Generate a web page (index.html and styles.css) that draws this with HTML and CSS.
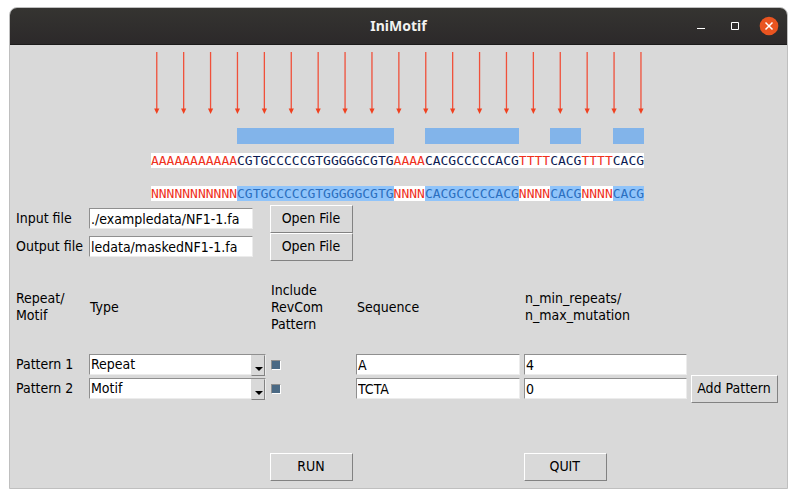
FILE: index.html
```html
<!DOCTYPE html>
<html lang="en">
<head>
<meta charset="utf-8">
<title>IniMotif</title>
<link rel="stylesheet" href="styles.css">
</head>
<body>
<div class="window">
  <header class="titlebar">
    <h1 class="title">IniMotif</h1>
    <div class="controls">
      <button class="control" type="button" aria-label="Minimize"><svg width="20" height="20" viewBox="0 0 20 20"><path d="M6 12.500h8" stroke="#fff"/></svg></button>
      <button class="control" type="button" aria-label="Maximize"><svg width="20" height="20" viewBox="0 0 20 20"><path d="M6.500 6.500h7v7h-7z" fill="none" stroke="#fff"/></svg></button>
      <button class="control" type="button" aria-label="Close"><svg width="20" height="20" viewBox="0 0 20 20"><circle cx="10" cy="10" r="9.300" fill="#e95420"/><path d="M6.500 6.500l7 7M13.500 6.500l-7 7" stroke="#fff" stroke-width="1.500"/></svg></button>
    </div>
  </header>
  <main class="content">
    <div class="figure">
      <svg class="arrows" viewBox="0 0 493 62" aria-hidden="true">
        <defs><g id="arrow"><path d="M0 0V57" stroke="#f0503a" stroke-width="1.300"/><path d="M-2.600 56.500h5.200L0 62z" fill="#f0401f"/></g></defs>
        <use href="#arrow" x="5.700"/><use href="#arrow" x="32.600"/><use href="#arrow" x="59.500"/><use href="#arrow" x="86.400"/><use href="#arrow" x="113.300"/><use href="#arrow" x="140.200"/><use href="#arrow" x="167.100"/><use href="#arrow" x="194"/><use href="#arrow" x="220.900"/><use href="#arrow" x="247.800"/><use href="#arrow" x="274.700"/><use href="#arrow" x="301.600"/><use href="#arrow" x="328.500"/><use href="#arrow" x="355.400"/><use href="#arrow" x="382.300"/><use href="#arrow" x="409.200"/><use href="#arrow" x="436.100"/><use href="#arrow" x="463"/><use href="#arrow" x="489.900"/>
      </svg>
      <div class="bars"><i class="gap-11"></i><i class="bar bar-20"></i><i class="gap-4"></i><i class="bar bar-12"></i><i class="gap-4"></i><i class="bar bar-4"></i><i class="gap-4"></i><i class="bar bar-4"></i></div>
      <div class="sequence"><span class="repeat">AAAAAAAAAAA</span><span>CGTGCCCCCGTGGGGGCGTG</span><span class="repeat">AAAA</span><span>CACGCCCCCACG</span><span class="repeat">TTTT</span><span>CACG</span><span class="repeat">TTTT</span><span>CACG</span></div>
      <div class="sequence masked"><span class="repeat">NNNNNNNNNNN</span><span class="kept">CGTGCCCCCGTGGGGGCGTG</span><span class="repeat">NNNN</span><span class="kept">CACGCCCCCACG</span><span class="repeat">NNNN</span><span class="kept">CACG</span><span class="repeat">NNNN</span><span class="kept">CACG</span></div>
    </div>
    <form class="form">
      <div class="row tall">
        <label class="label" for="input-file">Input file</label>
        <input class="entry path" id="input-file" type="text" value="./exampledata/NF1-1.fa">
        <button class="button" type="button">Open File</button>
      </div>
      <div class="row tall">
        <label class="label" for="output-file">Output file</label>
        <input class="entry path" id="output-file" type="text" value="ledata/maskedNF1-1.fa">
        <button class="button" type="button">Open File</button>
      </div>
      <div class="row headings">
        <span class="label">Repeat/<br>Motif</span>
        <span class="heading" id="type">Type</span>
        <span class="heading" id="revcom">Include<br>RevCom<br>Pattern</span>
        <span class="heading" id="seq">Sequence</span>
        <span class="heading" id="limit">n_min_repeats/<br>n_max_mutation</span>
      </div>
      <div class="row">
        <span class="label" id="p1">Pattern 1</span>
        <span class="combo"><select class="select" aria-labelledby="p1 type"><option>Repeat</option><option>Motif</option></select></span>
        <input class="check" type="checkbox" checked aria-labelledby="p1 revcom">
        <input class="entry" type="text" value="A" aria-labelledby="p1 seq">
        <input class="entry" type="text" value="4" aria-labelledby="p1 limit">
      </div>
      <div class="row tall">
        <span class="label" id="p2">Pattern 2</span>
        <span class="combo"><select class="select" aria-labelledby="p2 type"><option>Motif</option><option>Repeat</option></select></span>
        <input class="check" type="checkbox" checked aria-labelledby="p2 revcom">
        <input class="entry" type="text" value="TCTA" aria-labelledby="p2 seq">
        <input class="entry" type="text" value="0" aria-labelledby="p2 limit">
        <button class="button add" type="button">Add Pattern</button>
      </div>
      <div class="row actions">
        <button class="button run" type="button">RUN</button>
        <button class="button quit" type="button">QUIT</button>
      </div>
    </form>
  </main>
</div>
</body>
</html>
```
FILE: styles.css
```css
* { box-sizing: border-box; }

body {
  margin: 0;
  padding: 7px 9px 8px;
  background: #fff;
  color: #000;
  font: 14px/17px "DejaVu Sans Condensed", "DejaVu Sans", sans-serif;
}

button, input, select { font: inherit; color: inherit; margin: 0; border-radius: 0; }

.window {
  border: 1px solid #bfbfbf;
  border-radius: 8px 8px 0 0;
  background: #d9d9d9;
  overflow: hidden;
}

.titlebar {
  display: grid;
  grid-template-columns: 1fr auto 1fr;
  align-items: center;
  height: 37px;
  padding: 0 8px;
  border-bottom: 1px solid #1c1b1b;
  background: linear-gradient(#353431, #2c292a);
}

.title {
  grid-column: 2;
  margin: 0;
  color: #f2f2f0;
  font: bold 14px/18px "Noto Sans", sans-serif;
}

.controls { display: flex; justify-content: flex-end; gap: 14px; }
.control { width: 20px; height: 20px; padding: 0; border: 0; background: none; }
.control svg { display: block; }

.content { padding: 7px 9px 7px 4px; }

.figure {
  width: max-content;
  margin: 0 auto;
  padding-left: 3px;
  font: 13px/15px "DejaVu Sans Mono", monospace;
}

.arrows { display: block; width: 100%; height: 62px; }

.bars { display: flex; height: 16px; margin: 14px 0 9px; }
.bar { background: #82b4ea; }
.gap-4, .bar-4 { width: 4ch; }
.gap-11 { width: 11ch; }
.bar-12 { width: 12ch; }
.bar-20 { width: 20ch; }

.sequence { display: flex; height: 15px; background: #fff; color: #0c1a52; }
.repeat { color: #f0301c; }
.masked { margin: 18px 0 4px; }
.kept { background: #90c4fa; color: #2b6fc0; }

.row {
  display: grid;
  grid-template-columns: 75fr 181fr 86fr 168fr 167fr 87fr;
  align-items: center;
}

.label { padding-left: 2px; white-space: nowrap; }
.heading { padding-left: 1px; }
.headings { height: 93px; padding-bottom: 1px; }

.entry {
  width: calc(100% - 4px);
  height: 21px;
  padding: 0 1px;
  border: 1px solid;
  border-color: #8f8f8f #ececec #ececec #8f8f8f;
  background: #fff;
}

.path { width: calc(100% - 17px); }

.combo {
  display: block;
  position: relative;
  margin-right: 4px;
}

.select {
  appearance: none;
  display: block;
  width: 100%;
  height: 21px;
  padding: 0 14px 0 1px;
  border: 1px solid;
  border-color: #8f8f8f #ececec #ececec #8f8f8f;
  background: #fff;
}

.combo::before {
  content: "";
  position: absolute;
  top: 1px;
  right: 1px;
  width: 12px;
  height: 19px;
  border: 1px solid;
  border-color: #d9d9d9 #828282 #828282 #d9d9d9;
  background: #d9d9d9;
  pointer-events: none;
}

.combo::after {
  content: "";
  position: absolute;
  top: 13px;
  right: 3px;
  width: 8px;
  height: 4px;
  background: #000;
  clip-path: polygon(0 0, 100% 0, 50% 100%);
  pointer-events: none;
}

.check {
  appearance: none;
  width: 10px;
  height: 10px;
  margin-left: 1px;
  border: 1px solid;
  border-color: #8f8f8f #fff #fff #8f8f8f;
  background: #d9d9d9;
}
.check:checked { background: #4a6984; }

.button {
  width: calc(100% - 3px);
  height: 28px;
  padding: 0 1px 1px 0;
  border: 1px solid;
  border-color: #fff #828282 #828282 #fff;
  background: #d9d9d9;
  white-space: nowrap;
}

/* Rows with a button keep their fields one pixel above centre. */
.tall > :not(.button) { margin-bottom: 1px; }

.add { width: 100%; }
.actions { margin-top: 50px; }
.run { grid-column: 3; }
.quit { grid-column: 5; width: calc(50% - 1px); }
```
